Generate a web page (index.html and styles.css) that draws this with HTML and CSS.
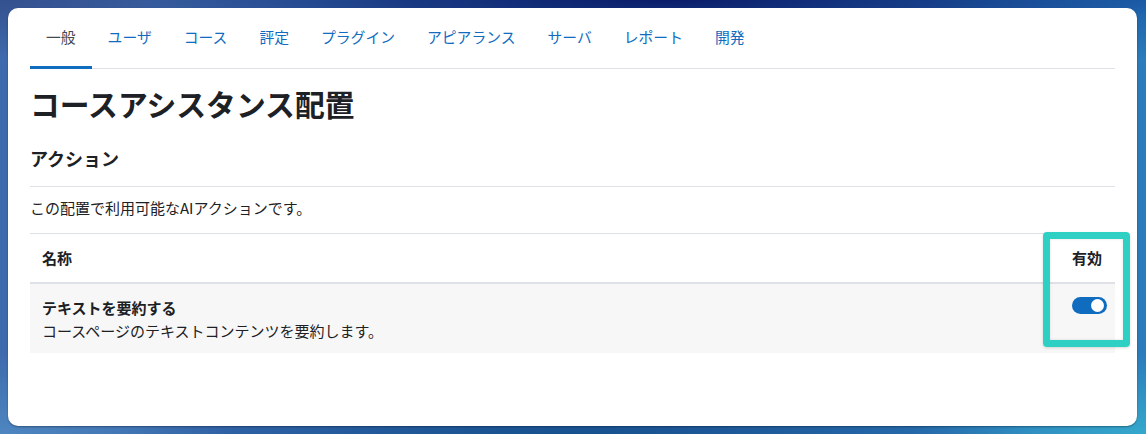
FILE: index.html
```html
<!DOCTYPE html>
<html lang="ja">
<head>
<meta charset="utf-8">
<title>コースアシスタンス配置</title>
<link rel="stylesheet" href="styles.css">
</head>
<body>
<div class="card">
  <nav class="tabs">
    <a class="tab active" href="#">一般</a>
    <a class="tab" href="#">ユーザ</a>
    <a class="tab" href="#">コース</a>
    <a class="tab" href="#">評定</a>
    <a class="tab" href="#">プラグイン</a>
    <a class="tab" href="#">アピアランス</a>
    <a class="tab" href="#">サーバ</a>
    <a class="tab" href="#">レポート</a>
    <a class="tab" href="#">開発</a>
  </nav>
  <h2 class="page-title">コースアシスタンス配置</h2>
  <h3 class="section-title">アクション</h3>
  <p class="desc">この配置で利用可能なAIアクションです。</p>
  <table class="actions">
    <thead>
      <tr><th class="col-name">名称</th><th class="col-enabled">有効</th></tr>
    </thead>
    <tbody>
      <tr>
        <td class="col-name">
          <div class="action-name">テキストを要約する</div>
          <div class="action-desc">コースページのテキストコンテンツを要約します。</div>
        </td>
        <td class="col-enabled"><span class="switch"><span class="knob"></span></span></td>
      </tr>
    </tbody>
  </table>
  <div class="highlight"></div>
</div>
</body>
</html>
```
FILE: styles.css
```css
* { box-sizing: border-box; }
html, body { margin: 0; padding: 0; }
body {
  width: 1146px;
  height: 434px;
  overflow: hidden;
  padding: 8px 9px 8px 8px;
  font-family: "Noto Sans CJK JP", "Noto Sans", sans-serif;
  color: #1d2125;
  background-color: #2a64a6;
  background-image:
    radial-gradient(ellipse 45% 40px at 58% 0, #0a1c6a 0%, rgba(10,28,106,0.6) 50%, rgba(10,28,106,0) 100%),
    radial-gradient(ellipse 30% 60px at 0 0, #34508e 0%, rgba(52,80,142,0) 100%),
    radial-gradient(ellipse 25% 60px at 100% 0, #1d5faa 0%, rgba(29,95,170,0) 100%),
    radial-gradient(ellipse 40% 30px at 50% 100%, #17508e 0%, rgba(23,80,142,0) 100%),
    radial-gradient(ellipse 20% 80px at 100% 100%, #35a8cc 0%, rgba(53,168,204,0) 100%),
    radial-gradient(ellipse 20% 80px at 0 100%, #4d86c0 0%, rgba(77,134,192,0) 100%),
    linear-gradient(90deg, #3f6bae 0%, #2a62a6 50%, #2a7cbb 100%);
}
.card {
  position: relative;
  height: 418px;
  background: #fff;
  border-radius: 10px;
  padding: 0 22px;
  box-shadow: 0 1px 2px rgba(0,0,0,0.35);
}
.tabs {
  display: flex;
  border-bottom: 1px solid #dee2e6;
}
.tab {
  display: block;
  padding: 19px 16px;
  line-height: 20px;
  font-size: 14.8px;
  color: #0f6cbf;
  text-decoration: none;
  border-bottom: 3px solid transparent;
  margin-bottom: -1px;
}
.tab.active {
  color: #44494e;
  border-bottom-color: #0f6cbf;
}
.page-title {
  margin: 17px 0 0;
  font-size: 29.8px;
  line-height: 35px;
  font-weight: 700;
}
.section-title {
  margin: 26px 0 0;
  padding-bottom: 17px;
  font-size: 18px;
  line-height: 22px;
  font-weight: 700;
  border-bottom: 1px solid #dee2e6;
}
.desc {
  margin: 0;
  padding: 11px 0 15px;
  font-size: 15px;
  line-height: 20px;
}
.actions {
  width: 100%;
  border-collapse: collapse;
  font-size: 15px;
}
.actions th {
  text-align: left;
  font-weight: 700;
  height: 49px;
  padding: 0 12px;
  border-top: 1px solid #dee2e6;
  border-bottom: 2px solid #dee2e6;
  vertical-align: middle;
}
.actions td {
  background: #f7f7f7;
  padding: 12px 12px 11px;
  vertical-align: top;
  line-height: 23px;
}
.actions .col-enabled {
  width: 54px;
  padding-right: 8px;
}
.action-name { font-weight: 700; }
.switch {
  display: block;
  position: relative;
  width: 35px;
  height: 17px;
  margin-top: 1px;
  border-radius: 9px;
  background: #0f6cbf;
}
.knob {
  position: absolute;
  top: 2px;
  right: 3px;
  width: 13px;
  height: 13px;
  border-radius: 50%;
  background: #fff;
}
.highlight {
  position: absolute;
  left: 1035px;
  top: 224px;
  width: 87px;
  height: 115px;
  border: 7px solid #2fd0c4;
  border-radius: 4px;
  box-shadow: inset 0 0 3px rgba(0,0,0,0.12), 0 1px 3px rgba(0,0,0,0.15);
}
```
